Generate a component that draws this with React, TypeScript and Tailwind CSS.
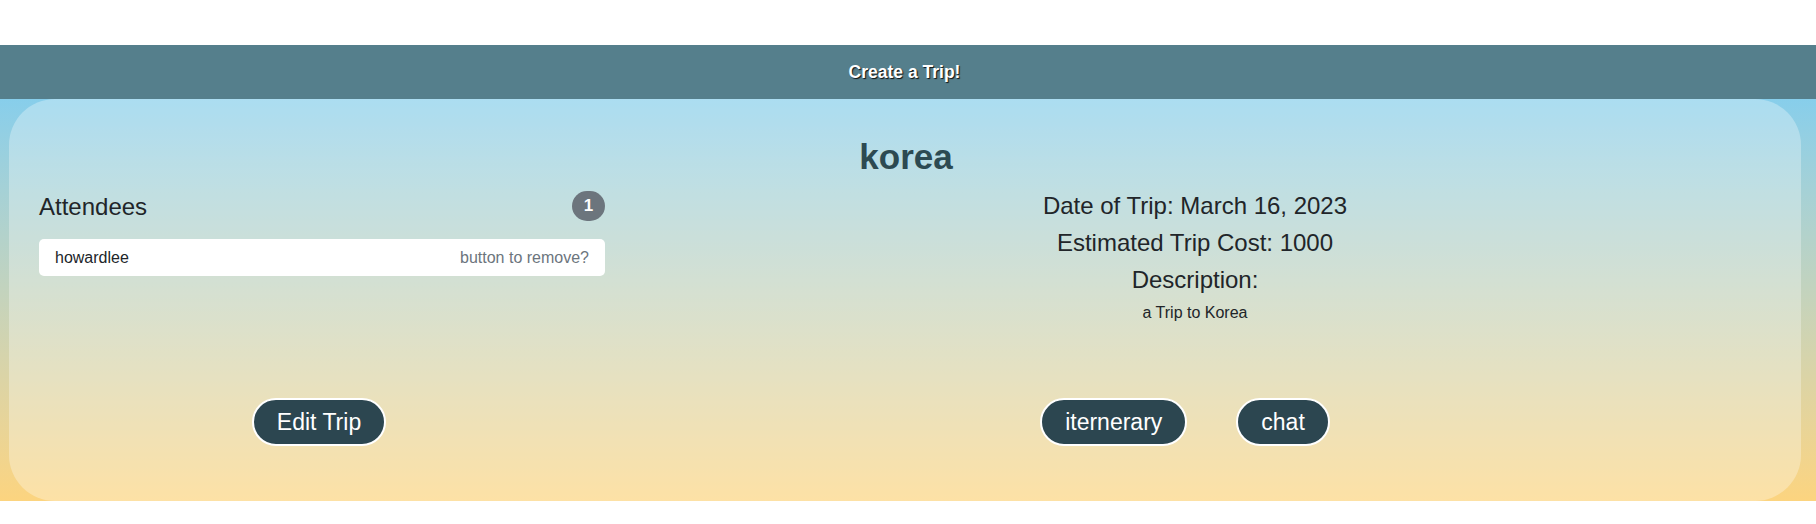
export default function App() {
    return (
        <div className="bg-white pt-[45px] pb-[23px] font-['Liberation_Sans',Arial,sans-serif] text-[#212529]">
            <header className="flex h-[54px] items-center justify-center bg-[#557f8c] pr-[7px]">
                <span className="text-[17.5px] font-bold text-white [text-shadow:1px_1px_1px_#111]">Create a Trip!</span>
            </header>

            <main className="bg-gradient-to-b from-[#87ceeb] to-[#fcd47f]">
                <div className="ml-[9px] mr-[15px] rounded-[46px] bg-white/30 pl-[30px] pr-[28px] pt-[37px] pb-[55px]">
                    <h1 className="text-center text-[35px] font-bold leading-[42px] text-[#2c4a52]">korea</h1>

                    <div className="mt-[13px] grid grid-cols-3">
                        <div className="pr-[12px]">
                            <div className="flex h-[30px] items-center justify-between">
                                <h4 className="text-[24px] leading-[29px]">Attendees</h4>
                                <span className="flex h-[30px] w-[33px] items-center justify-center rounded-full bg-[#6c757d] text-[17px] font-bold text-white">
                                    1
                                </span>
                            </div>
                            <ul className="mt-[18px]">
                                <li className="flex h-[37px] items-center justify-between rounded-[5px] bg-white px-[16px] text-[16px]">
                                    <span>howardlee</span>
                                    <span className="text-[#6c757d]">button to remove?</span>
                                </li>
                            </ul>
                        </div>

                        <div className="col-span-2 text-center">
                            <h4 className="mb-2 text-[24px] leading-[29px]">Date of Trip: March 16, 2023</h4>
                            <h4 className="mb-2 text-[24px] leading-[29px]">Estimated Trip Cost: 1000</h4>
                            <h4 className="mb-2 text-[24px] leading-[29px]">Description:</h4>
                            <p className="text-[16px] leading-[22px]">a Trip to Korea</p>
                        </div>
                    </div>

                    <div className="mt-[74px] grid grid-cols-3">
                        <div className="flex justify-center pr-[18px]">
                            <TripButton label="Edit Trip" />
                        </div>
                        <div className="col-span-2 flex justify-center gap-[49px] pr-[20px]">
                            <TripButton label="iternerary" />
                            <TripButton label="chat" />
                        </div>
                    </div>
                </div>
            </main>
        </div>
    );
}

function TripButton({ label }: { label: string }) {
    return (
        <button className="flex h-[48px] items-center rounded-full border-2 border-white bg-[#2c4650] px-[23px] text-[23px] text-white">
            {label}
        </button>
    );
}
